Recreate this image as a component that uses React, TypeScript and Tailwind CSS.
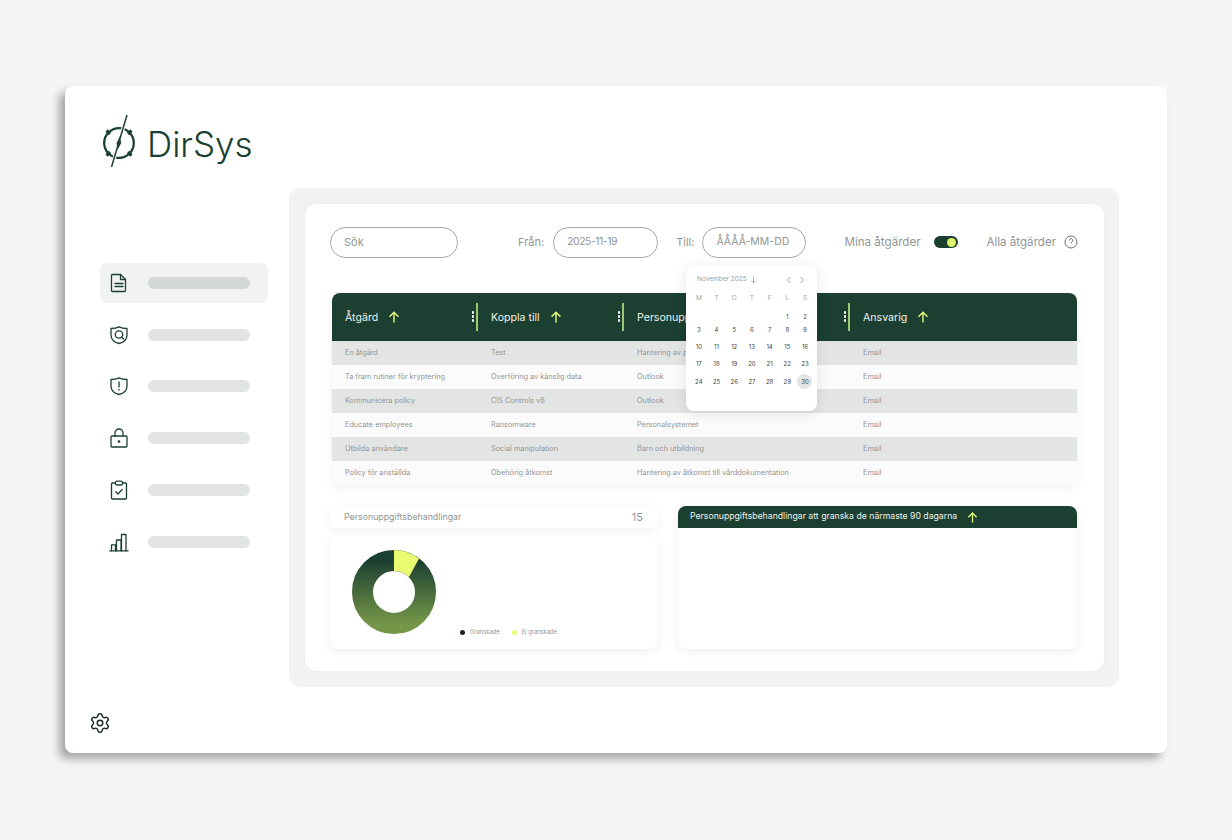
import { Settings } from "lucide-react";

const green = "#1b3f31";

const rows = [
  ["En åtgärd", "Test", "Hantering av p", "Email"],
  ["Ta fram rutiner för kryptering", "Överföring av känslig data", "Outlook", "Email"],
  ["Kommunicera policy", "CIS Controls v8", "Outlook", "Email"],
  ["Educate employees", "Ransomware", "Personalsystemet", "Email"],
  ["Utbilda användare", "Social manipulation", "Barn och utbildning", "Email"],
  ["Policy för anställda", "Obehörig åtkomst", "Hantering av åtkomst till vårddokumentation", "Email"],
];

const weeks = [
  ["", "", "", "", "", "1", "2"],
  ["3", "4", "5", "6", "7", "8", "9"],
  ["10", "11", "12", "13", "14", "15", "16"],
  ["17", "18", "19", "20", "21", "22", "23"],
  ["24", "25", "26", "27", "28", "29", "30"],
];

function Logo() {
  return (
    <svg width="36" height="54" viewBox="0 0 36 54" fill="none" stroke={green} className="shrink-0">
      <circle cx="18" cy="29" r="14.800" strokeWidth="2.300" />
      <path d="M5.500 16.500l3.500 3.500M30.500 16.500L27 20M5.500 41.500L9 38M30.500 41.500L27 38" strokeWidth="3.200" />
      <path d="M24.500 6L11.500 50" stroke="#fff" strokeWidth="3.500" />
      <path d="M26 1L10.500 53" strokeWidth="1.500" />
      <path d="M18.800 22.500l1.400 6.500-3.700 7-.9-7z" fill={green} stroke="none" />
    </svg>
  );
}

const navIcon = { width: 20, height: 20, viewBox: "0 0 20 20", fill: "none", stroke: green, strokeWidth: 1.3, strokeLinejoin: "round" as const, strokeLinecap: "round" as const };

function NavIcon({ kind }: { kind: number }) {
  if (kind === 0)
    return (
      <svg {...navIcon}>
        <path d="M3.500 1.500h8l5 5v11a1 1 0 0 1-1 1h-12a1 1 0 0 1-1-1v-15a1 1 0 0 1 1-1z" />
        <path d="M11.500 1.500v5h5" />
        <path d="M6 10.500h8M6 13.500h8" />
      </svg>
    );
  if (kind === 1 || kind === 2)
    return (
      <svg {...navIcon}>
        <path d="M2 3.500c2.500 0 5.500-.4 8-1.700 2.500 1.300 5.500 1.700 8 1.700v6.500c0 4.500-3.500 7.300-8 8.500-4.500-1.200-8-4-8-8.500z" />
        {kind === 1 ? (
          <>
            <circle cx="10" cy="9.500" r="3.700" />
            <path d="M12.700 12.200l1.800 1.800" />
          </>
        ) : (
          <>
            <path d="M10 6v5" />
            <path d="M10 13.500v.4" />
          </>
        )}
      </svg>
    );
  if (kind === 3)
    return (
      <svg {...navIcon}>
        <rect x="2" y="8" width="16" height="11" rx="1" />
        <path d="M6 8V5a4 4 0 0 1 8 0v3" />
        <circle cx="10" cy="13.500" r=".7" fill={green} />
      </svg>
    );
  if (kind === 4)
    return (
      <svg {...navIcon}>
        <path d="M6.500 3H3.500a1 1 0 0 0-1 1v14a1 1 0 0 0 1 1h13a1 1 0 0 0 1-1V4a1 1 0 0 0-1-1h-3" />
        <rect x="6.500" y="1.200" width="7" height="3.800" rx="1.500" />
        <path d="M6.800 11.800l2.200 2.200 4.200-4.500" />
      </svg>
    );
  return (
    <svg {...navIcon}>
      <path d="M.8 18.800h18.400" />
      <path d="M2.500 18.800v-6h4v6M7.500 18.800V8h4.500v10.800M12.500 18.800V2.500h4.500v16.300" />
    </svg>
  );
}

function Arrow({ size = 12 }: { size?: number }) {
  return (
    <svg width={size} height={size} viewBox="0 0 12 12" fill="none" stroke="#dcf47a" strokeWidth="1.5" className="shrink-0">
      <path d="M6 11.500V1.500M1.500 5.800L6 1.200l4.500 4.600" />
    </svg>
  );
}

function HeaderCell({ label, divider }: { label: string; divider: boolean }) {
  return (
    <div className="relative flex items-center pl-[13px]">
      <span className="pt-[1px] text-[10.600px] text-[#eef2ee]">{label}</span>
      <span className="ml-[10px]">
        <Arrow />
      </span>
      {divider && (
        <>
          <span className="absolute right-[4px] top-[18px] flex flex-col gap-[1.500px]">
            <span className="size-[2.500px] rounded-full bg-white" />
            <span className="size-[2.500px] rounded-full bg-white" />
            <span className="size-[2.500px] rounded-full bg-white" />
          </span>
          <span className="absolute right-0 top-[10px] h-[28px] w-[2px] bg-[#9cc96f]" />
        </>
      )}
    </div>
  );
}

function Calendar() {
  return (
    <div className="absolute left-[381px] top-[62px] h-[145px] w-[131px] rounded-lg bg-white px-[4px] pt-[9px] shadow-[0_2px_14px_rgba(0,0,0,0.10)]">
      <div className="flex h-[10px] items-center pl-[7px] text-[6.500px] text-[#9a9e9c]">
        <span>November 2025</span>
        <svg width="7" height="8" viewBox="0 0 7 8" fill="none" stroke="#9a9e9c" strokeWidth=".8" className="ml-[3px]">
          <path d="M3.500 .5v6.500M1 4.500l2.500 2.500L6 4.500" />
        </svg>
        <svg width="6" height="8" viewBox="0 0 6 8" fill="none" stroke="#808583" strokeWidth=".8" className="ml-[29px]">
          <path d="M4.500 1L1.500 4l3 3" />
        </svg>
        <svg width="6" height="8" viewBox="0 0 6 8" fill="none" stroke="#808583" strokeWidth=".8" className="ml-[7px]">
          <path d="M1.500 1l3 3-3 3" />
        </svg>
      </div>
      <div className="mt-[8px] grid h-[10px] grid-cols-[repeat(7,17.700px)] text-center text-[6.500px] leading-[10px] text-[#a2a6a4]">
        {["M", "T", "O", "T", "F", "L", "S"].map((d, i) => (
          <span key={i}>{d}</span>
        ))}
      </div>
      <div className="mt-[9.400px] grid grid-cols-[repeat(7,17.700px)] grid-rows-[8.700px_17.300px_17.300px_17.300px_17.300px] text-center text-[6px] leading-none text-[#3e4442]">
        {weeks.flat().map((d, i) => (
          <span key={i} className="flex items-center justify-center">
            {d === "30" ? (
              <span className="flex size-[15px] items-center justify-center rounded-full bg-[#e2e4e3]">{d}</span>
            ) : (
              d
            )}
          </span>
        ))}
      </div>
    </div>
  );
}

function Donut() {
  return (
    <svg width="84" height="84" viewBox="0 0 84 84" className="shrink-0">
      <defs>
        <linearGradient id="ring" x1="0" y1="0" x2="0" y2="1">
          <stop offset="0" stopColor="#1b3f31" />
          <stop offset="1" stopColor="#759648" />
        </linearGradient>
      </defs>
      <circle cx="42" cy="42" r="31.500" fill="none" stroke="url(#ring)" strokeWidth="21" />
      <path d="M42 0a42 42 0 0 1 25 8.500L57 27A21 21 0 0 0 42 21z" fill="#e8fb72" />
    </svg>
  );
}

export default function App() {
  return (
    <div className="h-[840px] w-[1232px] overflow-hidden bg-[#f3f5f6] pl-[65px] pt-[86px] text-[#929694] [font-family:Inter,'Liberation_Sans',sans-serif]">
      <div className="flex h-[667px] w-[1102px] rounded-lg bg-white shadow-[-6px_6px_8px_rgba(70,75,75,0.45)]">
        {/* Sidebar */}
        <aside className="flex w-[224px] shrink-0 flex-col">
          <div className="flex items-center pl-[36px] pt-[28px]">
            <Logo />
            <span className="ml-[10px] pt-[6px] text-[35px] font-light leading-none text-[#1b3f31]">DirSys</span>
          </div>
          <nav className="ml-[35px] mt-[89px] flex w-[168px] flex-col">
            {[0, 1, 2, 3, 4, 5].map((k) => (
              <div key={k} className={`flex h-[51.800px] items-center ${k === 0 ? "relative" : ""}`}>
                {k === 0 && <span className="absolute inset-x-0 top-[6px] h-[40px] rounded-md bg-[#f1f3f2]" />}
                <span className="relative ml-[9px] flex w-[20px] justify-center">
                  <NavIcon kind={k} />
                </span>
                <span className={`relative ml-[19px] h-[12px] w-[102px] rounded-full ${k === 0 ? "bg-[#d3d8d6]" : "bg-[#e1e4e3]"}`} />
              </div>
            ))}
          </nav>
          <div className="mt-auto pb-[19px] pl-[24px]">
            <Settings size={22} strokeWidth={1.6} color="#1c2a26" />
          </div>
        </aside>

        {/* Main panel */}
        <div className="mt-[102px] h-[499px] w-[830px] rounded-xl bg-[#f1f3f2] p-[16px]">
          <div className="relative h-[467px] w-[799px] rounded-xl bg-white pl-[25px] pt-[22px] shadow-[0_0_6px_rgba(0,0,0,0.03)]">
            {/* Filters */}
            <div className="flex h-[32px] items-center text-[11px]">
              <div className="flex h-[31px] w-[128px] items-center rounded-full border border-[#a5a8a7] pl-[13px]">Sök</div>
              <span className="ml-[60px] pt-[1px]">Från:</span>
              <div className="ml-[9px] flex h-[31px] w-[105px] items-center rounded-full border border-[#a5a8a7] pl-[13px] text-[10.500px] tracking-[-0.5px]">2025-11-19</div>
              <span className="ml-[18px] pt-[1px]">Till:</span>
              <div className="ml-[8px] flex h-[31px] w-[104px] items-center rounded-full border border-[#a5a8a7] pl-[13px] text-[10.500px]">ÅÅÅÅ-MM-DD</div>
              <span className="ml-[38px] w-[76px] whitespace-nowrap pt-[1px] text-[11.600px]">Mina åtgärder</span>
              <span className="ml-[14px] flex h-[12px] w-[24px] items-center justify-end rounded-full bg-[#1b3f31] pr-[2px]">
                <span className="size-[9px] rounded-full bg-[#dff36b]" />
              </span>
              <span className="ml-[28px] w-[70px] whitespace-nowrap pt-[1px] text-[11.600px]">Alla åtgärder</span>
              <svg width="14" height="14" viewBox="0 0 14 14" fill="none" stroke="#6b706e" strokeWidth="1" className="ml-[8px]">
                <circle cx="7" cy="7" r="6" />
                <path d="M5.200 5.500a1.800 1.800 0 1 1 2.800 1.500c-.7.400-1 .8-1 1.500" />
                <path d="M7 10.200v.4" />
              </svg>
            </div>

            {/* Table */}
            <div className="ml-[2px] mt-[35px] w-[745px] overflow-hidden rounded-t-lg rounded-b-md bg-white text-[7.300px] shadow-[0_3px_10px_rgba(0,0,0,0.06)]">
              <div className="grid h-[48px] grid-cols-[146px_146px_226px_227px] bg-[#1b3f31]">
                <HeaderCell label="Åtgärd" divider />
                <HeaderCell label="Koppla till" divider />
                <HeaderCell label="Personuppgiftsbehandling" divider />
                <HeaderCell label="Ansvarig" divider={false} />
              </div>
              {rows.map((r, i) => (
                <div key={i} className={`grid h-[24px] grid-cols-[146px_146px_226px_227px] items-center pt-[1px] ${i % 2 === 0 ? "bg-[#e2e5e4]" : "bg-[#fbfbfb]"}`}>
                  {r.map((c, j) => (
                    <span key={j} className="truncate pl-[13px]">
                      {c}
                    </span>
                  ))}
                </div>
              ))}
            </div>

            {/* Bottom cards */}
            <div className="mt-[21px] flex gap-[20px]">
              <div className="flex w-[328px] flex-col gap-[8px]">
                <div className="flex h-[22px] items-center justify-between rounded-md bg-white pl-[14px] pr-[15px] text-[8.800px] shadow-[0_2px_8px_rgba(0,0,0,0.06)]">
                  <span>Personuppgiftsbehandlingar</span>
                  <span className="text-[11px]">15</span>
                </div>
                <div className="flex h-[113px] rounded-lg bg-white pl-[22px] pt-[14px] shadow-[0_2px_10px_rgba(0,0,0,0.07)]">
                  <Donut />
                  <div className="ml-[24px] mt-[78px] flex h-[8px] items-center text-[5.800px]">
                    <span className="size-[5px] rounded-full bg-[#16241f]" />
                    <span className="ml-[5px]">Granskade</span>
                    <span className="ml-[12px] size-[5px] rounded-full bg-[#e8fb72]" />
                    <span className="ml-[5px]">Ej granskade</span>
                  </div>
                </div>
              </div>
              <div className="h-[143px] w-[399px] overflow-hidden rounded-lg bg-white shadow-[0_2px_10px_rgba(0,0,0,0.07)]">
                <div className="flex h-[22px] items-center bg-[#1b3f31] pl-[12px] text-[8.700px] text-[#eef2ee]">
                  <span>Personuppgiftsbehandlingar att granska de närmaste 90 dagarna</span>
                  <span className="ml-[10px]">
                    <Arrow size={11} />
                  </span>
                </div>
              </div>
            </div>

            <Calendar />
          </div>
        </div>
      </div>
    </div>
  );
}
